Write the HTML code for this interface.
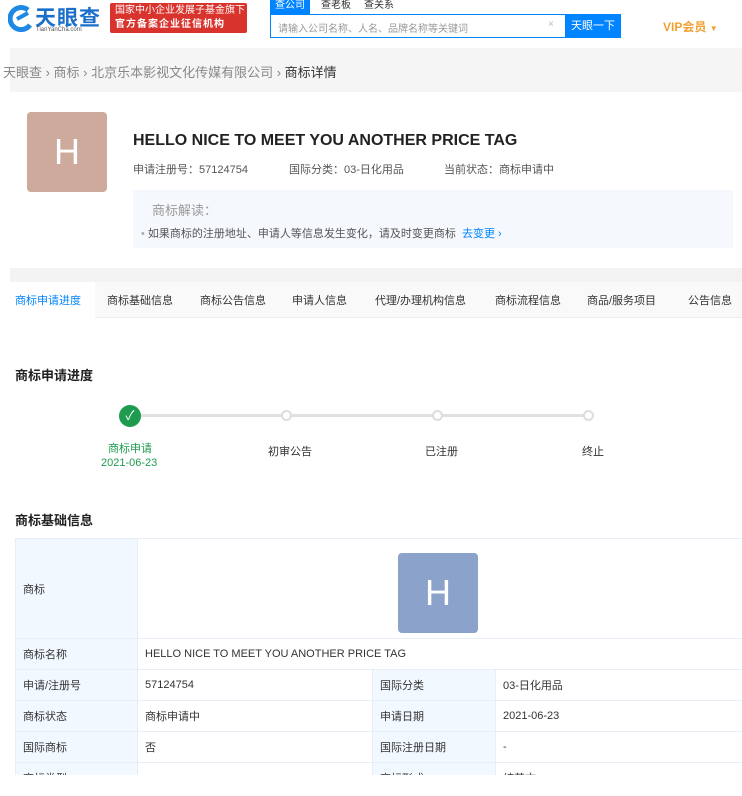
<!DOCTYPE html>
<html><head><meta charset="utf-8"><style>
*{margin:0;padding:0;box-sizing:border-box}
body{width:742px;height:796px;overflow:hidden;background:#fff;font-family:"Liberation Sans","Noto Sans CJK SC",sans-serif;font-size:12px;color:#333;position:relative}
.a{position:absolute;white-space:nowrap}
td{border:1px solid #e8eef5;padding:0 7px;font-size:11px;color:#333;height:31px;vertical-align:middle}
td.l{background:#f2f8ff}
</style></head><body>
<svg class="a" style="left:8px;top:5px" width="26" height="28" viewBox="0 0 26 28"><path d="M20 5 A11 11 0 1 0 22 20" fill="none" stroke="#1e88e5" stroke-width="5"/><path d="M9 14 L20 8" stroke="#1e88e5" stroke-width="4"/></svg>
<div class="a" style="left:35px;top:2px;font-size:21px;font-weight:bold;color:#1a6fc9;letter-spacing:1px">天眼查</div>
<div class="a" style="left:36px;top:27px;font-size:6px;color:#555">TianYanCha.com</div>
<div class="a" style="left:110px;top:3px;width:137px;height:30px;background:#d9332e;border-radius:2px;color:#fff;font-size:10px;line-height:14px;padding:1px 5px">国家中小企业发展子基金旗下<br><b style="letter-spacing:1px">官方备案企业征信机构</b></div>
<div class="a" style="left:270px;top:0;width:40px;height:14px;background:#0084ff;color:#fff;font-size:10px;text-align:center;line-height:12px">查公司</div>
<div class="a" style="left:321px;top:0;font-size:10px;color:#333;line-height:12px">查老板</div>
<div class="a" style="left:364px;top:0;font-size:10px;color:#333;line-height:12px">查关系</div>
<div class="a" style="left:270px;top:14px;width:350px;height:24px;border:1px solid #0084ff;background:#fff"></div>
<div class="a" style="left:278px;top:20px;font-size:10px;color:#999">请输入公司名称、人名、品牌名称等关键词</div>
<div class="a" style="left:548px;top:19px;font-size:10px;color:#bbb">×</div>
<div class="a" style="left:565px;top:14px;width:56px;height:24px;background:#0084ff;color:#fff;font-size:11px;text-align:center;line-height:24px">天眼一下</div>
<div class="a" style="left:663px;top:18px;font-size:12px;font-weight:bold;color:#f0a030">VIP会员 <span style="font-size:8px">▼</span></div>
<div class="a" style="left:10px;top:48px;width:732px;height:44px;background:#f5f5f5"></div>
<div class="a" style="left:3px;top:62px;font-size:13px;color:#888">天眼查 › 商标 › 北京乐本影视文化传媒有限公司 › <span style="color:#333">商标详情</span></div>
<div class="a" style="left:27px;top:112px;width:80px;height:80px;background:#cdaa9c;border-radius:4px;color:#fff;font-size:36px;text-align:center;line-height:80px">H</div>
<div class="a" style="left:133px;top:132px;font-size:16px;font-weight:bold;color:#222">HELLO NICE TO MEET YOU ANOTHER PRICE TAG</div>
<div class="a" style="left:133px;top:161px;font-size:11px;color:#555">申请注册号：57124754</div>
<div class="a" style="left:289px;top:161px;font-size:11px;color:#555">国际分类：03-日化用品</div>
<div class="a" style="left:444px;top:161px;font-size:11px;color:#555">当前状态：商标申请中</div>
<div class="a" style="left:133px;top:190px;width:600px;height:58px;background:#f5f9fd"></div>
<div class="a" style="left:152px;top:200px;font-size:13px;color:#999">商标解读：</div>
<div class="a" style="left:141px;top:225px;font-size:11px;color:#555"><span style="color:#aaa">•</span> 如果商标的注册地址、申请人等信息发生变化，请及时变更商标 <span style="color:#0084ff;margin-left:3px">去变更 ›</span></div>
<div class="a" style="left:10px;top:268px;width:732px;height:14px;background:#f3f3f3"></div>
<div class="a" style="left:10px;top:282px;width:732px;height:36px;background:#f9f9f9;border-bottom:1px solid #eee"></div>
<div class="a" style="left:10px;top:282px;width:85px;height:36px;background:#fff"></div>
<div class="a" style="left:15px;top:292px;font-size:11px;color:#0084ff">商标申请进度</div>
<div class="a" style="left:107px;top:292px;font-size:11px">商标基础信息</div>
<div class="a" style="left:200px;top:292px;font-size:11px">商标公告信息</div>
<div class="a" style="left:292px;top:292px;font-size:11px">申请人信息</div>
<div class="a" style="left:375px;top:292px;font-size:11px">代理/办理机构信息</div>
<div class="a" style="left:495px;top:292px;font-size:11px">商标流程信息</div>
<div class="a" style="left:587px;top:292px;font-size:11px">商品/服务项目</div>
<div class="a" style="left:688px;top:292px;font-size:11px">公告信息</div>
<div class="a" style="left:15px;top:365px;font-size:13px;font-weight:bold;color:#222">商标申请进度</div>
<div class="a" style="left:130px;top:414px;width:460px;height:3px;background:#e0e0e0"></div>
<div class="a" style="left:119px;top:405px;width:22px;height:22px;border-radius:50%;background:#1e9b4f;color:#fff;font-size:13px;text-align:center;line-height:22px">✓</div>
<div class="a" style="left:281px;top:410px;width:11px;height:11px;border-radius:50%;border:2px solid #ddd;background:#fff"></div>
<div class="a" style="left:432px;top:410px;width:11px;height:11px;border-radius:50%;border:2px solid #ddd;background:#fff"></div>
<div class="a" style="left:583px;top:410px;width:11px;height:11px;border-radius:50%;border:2px solid #ddd;background:#fff"></div>
<div class="a" style="left:108px;top:440px;font-size:11px;color:#1e9b4f">商标申请</div>
<div class="a" style="left:101px;top:457px;font-size:11px;color:#1e9b4f">2021-06-23</div>
<div class="a" style="left:268px;top:443px;font-size:11px">初审公告</div>
<div class="a" style="left:425px;top:443px;font-size:11px">已注册</div>
<div class="a" style="left:582px;top:443px;font-size:11px">终止</div>
<div class="a" style="left:15px;top:510px;font-size:13px;font-weight:bold;color:#222">商标基础信息</div>
<div class="a" style="left:15px;top:538px;width:727px;height:237px;overflow:hidden">
<table style="border-collapse:collapse;width:740px;table-layout:fixed">
<colgroup><col style="width:122px"><col style="width:235px"><col style="width:123px"><col></colgroup>
<tr><td class="l" style="height:100px">商标</td><td colspan="3" style="padding:0"><div style="margin:9px 0 0 260px;width:80px;height:80px;background:#8ba3cb;border-radius:4px;color:#fff;font-size:36px;text-align:center;line-height:80px">H</div></td></tr>
<tr><td class="l">商标名称</td><td colspan="3">HELLO NICE TO MEET YOU ANOTHER PRICE TAG</td></tr>
<tr><td class="l">申请/注册号</td><td>57124754</td><td class="l">国际分类</td><td>03-日化用品</td></tr>
<tr><td class="l">商标状态</td><td>商标申请中</td><td class="l">申请日期</td><td>2021-06-23</td></tr>
<tr><td class="l">国际商标</td><td>否</td><td class="l">国际注册日期</td><td>-</td></tr>
<tr><td class="l">商标类型</td><td></td><td class="l">商标形式</td><td>纯英文</td></tr>
</table></div>
</body></html>
